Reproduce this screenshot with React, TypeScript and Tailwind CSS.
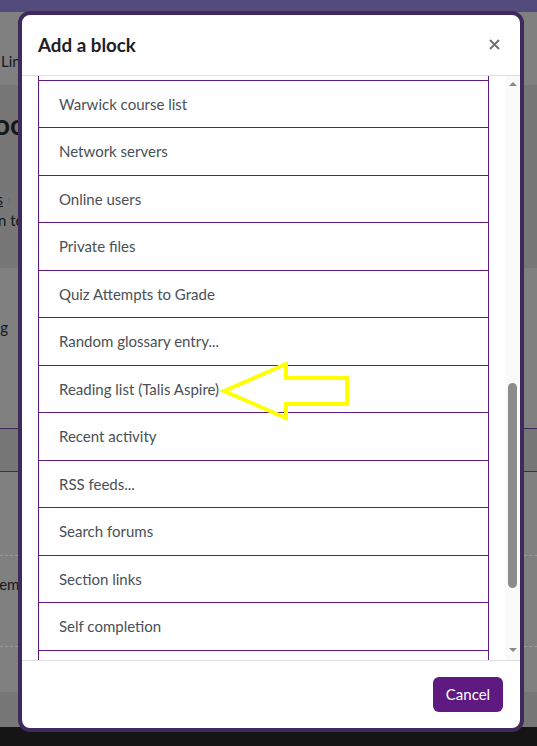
import React from 'react';

// Blocks offered in the picker, in the order the dialog lists them
const BLOCKS = [
  'Text',
  'Warwick course list',
  'Network servers',
  'Online users',
  'Private files',
  'Quiz Attempts to Grade',
  'Random glossary entry...',
  'Reading list (Talis Aspire)',
  'Recent activity',
  'RSS feeds...',
  'Search forums',
  'Section links',
  'Self completion',
  'Social activities',
  'Starred courses',
];

// Dimmed course page sitting behind the modal backdrop
const BackgroundPage: React.FC = () => (
  <div className="flex h-[727px] flex-col bg-[#808080] text-[#151719]">
    <div className="h-[12px] bg-[#524b7c]" />
    <div className="h-[73px] pt-[38px] pl-[1px] text-[15px] leading-[22px]">Links</div>
    <div className="flex h-[183px] flex-col bg-[#777777]">
      <div className="-ml-[32px] mt-[22px] text-[28px] font-bold leading-[34px] whitespace-nowrap">Moodle</div>
      <div className="mt-[3px] pl-[14px] text-[15px] font-bold leading-[14px]">⋮</div>
      <div className="mt-[31px] -ml-[50px] text-[15px] leading-[20px] whitespace-nowrap">
        <span className="underline">Courses</span> <span className="text-[#6b6b6b]">›</span>
      </div>
      <div className="-ml-[38px] text-[15px] leading-[22px] whitespace-nowrap">Return to</div>
    </div>
    <div className="h-[160px] pt-[48px] -ml-[38px] text-[15px] leading-[22px] whitespace-nowrap">Setting</div>
    <div className="h-[44px] border-y border-[#3d2b55] bg-[#777777]" />
    <div className="flex h-[220px] flex-col">
      <div className="mt-[83px] border-t border-dashed border-[#9a9a9a]" />
      <div className="mt-[17px] -ml-[60px] text-[15px] leading-[22px] whitespace-nowrap">Announcement</div>
      <div className="mt-[51px] border-t border-dashed border-[#9a9a9a]" />
    </div>
    <div className="flex-1 bg-[#777777]" />
  </div>
);

const ScrollTrack: React.FC = () => (
  <div className="flex w-[15px] flex-col items-center bg-[#fafafa]">
    <div className="mt-[6px] h-0 w-0 border-x-[4px] border-b-[4px] border-x-transparent border-b-[#8a8a8a]" />
    <div className="mt-[297px] h-[205px] w-[9px] rounded-full bg-[#8c8c8c]" />
    <div className="flex-1" />
    <div className="mb-[8px] h-0 w-0 border-x-[4px] border-t-[4px] border-x-transparent border-t-[#8a8a8a]" />
  </div>
);

const AddBlockModal: React.FC = () => (
  <div className="absolute left-[18px] top-[11px] flex h-[721px] w-[506px] flex-col overflow-hidden rounded-[12px] border-4 border-[#3f2a5c] bg-white">
    <div className="flex h-[61px] shrink-0 items-center justify-between border-b border-[#dee2e6] pl-4 pr-5">
      <h5 className="text-[18.75px] font-bold text-[#1d2125]">Add a block</h5>
      <svg width="11" height="11" viewBox="0 0 11 11" className="mt-[-1px]">
        <path d="M1 1L10 10M10 1L1 10" stroke="#707070" strokeWidth="2" />
      </svg>
    </div>

    <div className="flex h-[584px] shrink-0">
      <div className="flex-1 overflow-hidden px-4">
        <div className="-mt-[44px] border-x border-[#5f1b86]">
          {BLOCKS.map((name) => (
            <div
              key={name}
              className="border-t border-[#5f1b86] px-5 py-3 text-[15px] leading-[22.5px] text-[#495057]"
            >
              {name}
            </div>
          ))}
        </div>
      </div>
      <ScrollTrack />
    </div>

    <div className="flex flex-1 items-center justify-end border-t border-[#dee2e6] pr-[17px]">
      <button className="h-[35px] w-[70px] rounded-[6px] bg-[#5e1a80] text-[15px] text-white">Cancel</button>
    </div>
  </div>
);

export default function App() {
  return (
    <div className="relative h-[746px] w-[537px] overflow-hidden bg-[#151515] font-['Lato',sans-serif]">
      <BackgroundPage />
      <AddBlockModal />
      {/* highlight arrow drawn over the list */}
      <svg className="pointer-events-none absolute left-0 top-0" width="537" height="746">
        <polygon
          points="224,391 286,364 286,378 347,378 347,404 286,404 286,418"
          fill="none"
          stroke="#ffff00"
          strokeWidth="4"
        />
      </svg>
    </div>
  );
}
